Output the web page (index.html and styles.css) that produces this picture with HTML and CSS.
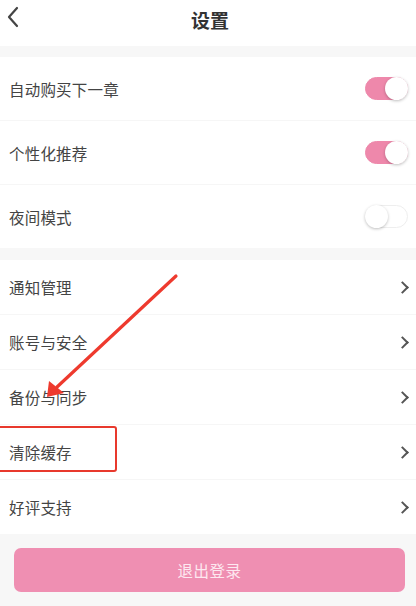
FILE: index.html
```html
<!DOCTYPE html>
<html lang="zh-CN">
<head>
  <meta charset="UTF-8" />
  <title>设置</title>
  <meta name="viewport" content="width=device-width, initial-scale=1.0" />
  <link rel="stylesheet" href="styles.css">
</head>
<body>

  <div class="topbar">
    <div class="back">
      <svg width="14" height="22" viewBox="0 0 14 22">
        <path d="M11 2 L3 11 L11 20" fill="none" stroke="#444" stroke-width="2.2" stroke-linecap="round" stroke-linejoin="round"/>
      </svg>
    </div>
    <div class="title">设置</div>
  </div>

  <!-- 开关 -->
  <div class="group">
    <div class="row tall">
      <span class="label">自动购买下一章</span>
      <span class="switch on"><span class="knob"></span></span>
    </div>
    <div class="row tall">
      <span class="label">个性化推荐</span>
      <span class="switch on"><span class="knob"></span></span>
    </div>
    <div class="row tall last">
      <span class="label">夜间模式</span>
      <span class="switch"><span class="knob"></span></span>
    </div>
  </div>

  <!-- 菜单 -->
  <div class="group second">
    <div class="row"><span class="label">通知管理</span><span class="arrow"></span></div>
    <div class="row"><span class="label">账号与安全</span><span class="arrow"></span></div>
    <div class="row"><span class="label">备份与同步</span><span class="arrow"></span></div>
    <div class="row"><span class="label">清除缓存</span><span class="arrow"></span></div>
    <div class="row last"><span class="label">好评支持</span><span class="arrow"></span></div>
  </div>

  <div class="footer">
    <button class="logout">退出登录</button>
  </div>

  <!-- 标注 -->
  <div class="mark-box"></div>
  <svg class="mark-arrow" width="416" height="606" viewBox="0 0 416 606">
    <path d="M176 276 L57 387" stroke="#ee3a2e" stroke-width="3.2" stroke-linecap="round"/>
    <polygon points="47,397 49,381 64,393" fill="#ee3a2e"/>
  </svg>

</body>
</html>
```

FILE: styles.css
```css
body {
  margin: 0;
  width: 416px;
  font-family: "Noto Sans CJK SC", "Noto Sans", sans-serif;
  background: #f7f7f7;
  color: #444;
  position: relative;
}

.topbar {
  height: 46px;
  background: #fff;
  display: flex;
  align-items: center;
  justify-content: center;
  position: relative;
}

.back {
  position: absolute;
  left: 6px;
  top: 6px;
}

.title {
  font-size: 19px;
  font-weight: bold;
  color: #333;
  margin-top: -8px;
  margin-left: 4px;
}

.group {
  background: #fff;
  margin-top: 11px;
}

.group.second {
  margin-top: 12px;
}

.row {
  height: 54px;
  display: flex;
  align-items: center;
  justify-content: space-between;
  padding: 0 8px 0 9px;
  border-bottom: 1px solid #f6f6f6;
}

.row.tall {
  height: 63px;
}

.row.last {
  border-bottom: none;
}

.label {
  font-size: 15.5px;
  letter-spacing: 0.2px;
  color: #444;
}

.switch {
  width: 43px;
  height: 23px;
  border-radius: 12px;
  background: #fff;
  border: 1px solid #eee;
  box-sizing: border-box;
  position: relative;
}

.switch.on {
  background: #ee88ab;
  border-color: #ee88ab;
}

.knob {
  position: absolute;
  top: -1px;
  left: -1px;
  width: 23px;
  height: 23px;
  border-radius: 50%;
  background: #fff;
  box-shadow: 0 1px 3px rgba(0,0,0,0.25);
}

.switch.on .knob {
  left: auto;
  right: -1px;
}

.arrow {
  width: 7px;
  height: 7px;
  border-top: 2px solid #555;
  border-right: 2px solid #555;
  transform: rotate(45deg);
  margin-right: 1px;
}

.footer {
  padding: 14px 11px 20px 14px;
}

.logout {
  width: 100%;
  height: 44px;
  border: none;
  border-radius: 7px;
  background: #ef8fb2;
  color: #fde8f0;
  font-family: inherit;
  font-size: 15.5px;
  letter-spacing: 0.5px;
}

.mark-box {
  position: absolute;
  left: -4px;
  top: 426px;
  width: 117px;
  height: 42px;
  border: 2.5px solid #e8392d;
  border-radius: 3px;
}

.mark-arrow {
  position: absolute;
  left: 0;
  top: 0;
  pointer-events: none;
}
```
